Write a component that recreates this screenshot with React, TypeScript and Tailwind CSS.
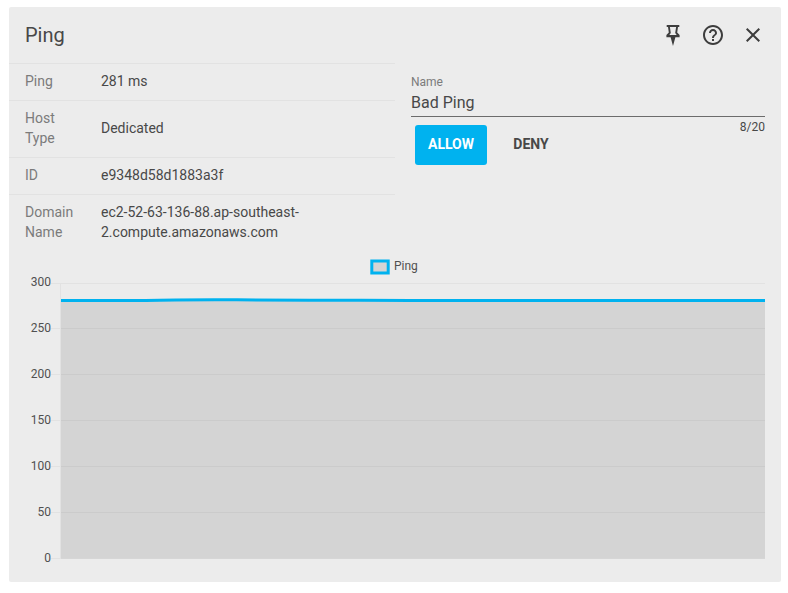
import React from "react";

const rows = [
  { label: "Ping", value: "281 ms" },
  { label: "Host Type", value: "Dedicated" },
  { label: "ID", value: "e9348d58d1883a3f" },
  { label: "Domain Name", value: "ec2-52-63-136-88.ap-southeast-2.compute.amazonaws.com" },
];

const ticks = [
  { label: 300, y: 283.5, textY: 286 },
  { label: 250, y: 328.5, textY: 332 },
  { label: 200, y: 374.5, textY: 378 },
  { label: 150, y: 420.5, textY: 424 },
  { label: 100, y: 466.5, textY: 470 },
  { label: 50, y: 512.5, textY: 516 },
  { label: 0, y: 558.5, textY: 562 },
];

function PinIcon() {
  return (
    <svg className="size-6" viewBox="0 0 24 24" fill="currentColor" fillRule="evenodd">
      <path d="M5.7 2H18.3V3.9H17L16.2 9.5L18.6 12V14.2H14.4L12 23L9.6 14.2H5.4V12L7.8 9.5L7 3.9H5.7ZM8.9 3.9L9.8 10L8.3 12H15.7L14.2 10L15.1 3.9Z" />
    </svg>
  );
}

function HelpIcon() {
  return (
    <svg className="size-6" viewBox="0 0 24 24" fill="currentColor">
      <path d="M11 18h2v-2h-2v2zm1-16C6.48 2 2 6.48 2 12s4.48 10 10 10 10-4.48 10-10S17.52 2 12 2zm0 18c-4.41 0-8-3.59-8-8s3.59-8 8-8 8 3.59 8 8-3.59 8-8 8zm0-14c-2.21 0-4 1.79-4 4h2c0-1.1.9-2 2-2s2 .9 2 2c0 2-3 1.75-3 5h2c0-2.25 3-2.5 3-5 0-2.21-1.79-4-4-4z" />
    </svg>
  );
}

function CloseIcon() {
  return (
    <svg className="size-6" viewBox="0 0 24 24" fill="currentColor">
      <path d="M19 6.41 17.59 5 12 10.59 6.41 5 5 6.41 10.59 12 5 17.59 6.41 19 12 13.41 17.59 19 19 17.59 13.41 12z" />
    </svg>
  );
}

function Chart() {
  return (
    <svg className="block h-[312px] w-[740px]" viewBox="25 255 740 312">
      {ticks.map((t) => (
        <line key={t.label} x1="51" x2="765" y1={t.y} y2={t.y} stroke="#e2e2e2" />
      ))}
      <line x1="60.5" x2="60.5" y1="283" y2="559" stroke="#e2e2e2" />
      <path d="M61 300.5H765V558.5H61Z" fill="#000" fillOpacity="0.1" />
      <path d="M61 300.5H135C165 300.2 185 299.8 215 299.8S270 300.2 310 300.2S370 300.3 410 300.5H765" fill="none" stroke="#00b2ef" strokeWidth="3" />
      {ticks.map((t) => (
        <text key={t.label} x="51" y={t.textY} textAnchor="end" fontSize="12" fill="#505050">
          {t.label}
        </text>
      ))}
      <rect x="371.8" y="261" width="16.4" height="12" fill="#d4d4d4" stroke="#00b2ef" strokeWidth="3" />
      <text x="394" y="270" fontSize="12" fill="#505050">Ping</text>
    </svg>
  );
}

export default function App() {
  return (
    <main className="h-[593px] w-[788px] bg-white pt-[7px] pl-[9px] font-['Roboto',sans-serif] text-[#484848]">
      <section className="h-[575px] w-[772px] rounded-[2px] bg-[#ececec]">
        <header className="flex h-14 items-center justify-between px-4">
          <h1 className="text-xl leading-7">Ping</h1>
          <div className="flex gap-4 text-[#3d3d3d]">
            <button aria-label="Pin"><PinIcon /></button>
            <button aria-label="Help"><HelpIcon /></button>
            <button aria-label="Close"><CloseIcon /></button>
          </div>
        </header>
        <div className="flex h-48">
          <dl className="w-[386px] text-sm leading-5">
            {rows.map((r) => (
              <div key={r.label} className="flex items-center border-t border-[#e2e2e2] pt-[7px] pb-[9px] pl-4">
                <dt className="w-[76px] pr-4 text-[#7b7b7b]">{r.label}</dt>
                <dd className="w-[220px]">{r.value}</dd>
              </div>
            ))}
          </dl>
          <div className="flex flex-1 flex-col px-4 pt-3">
            <label className="text-xs leading-[14px] text-[#7b7b7b]">Name</label>
            <div className="flex h-[28px] items-center border-b border-[#6c6c6c] text-base">Bad Ping</div>
            <div className="flex justify-between">
              <div className="flex gap-2 pt-2 pl-1 text-sm font-bold">
                <button className="h-10 w-[72px] rounded-[3px] bg-[#00b2ef] pb-0.5 text-white">ALLOW</button>
                <button className="h-10 w-[72px] pb-0.5">DENY</button>
              </div>
              <span className="pt-[2px] text-xs leading-4">8/20</span>
            </div>
          </div>
        </div>
        <div className="pl-4"><Chart /></div>
      </section>
    </main>
  );
}
